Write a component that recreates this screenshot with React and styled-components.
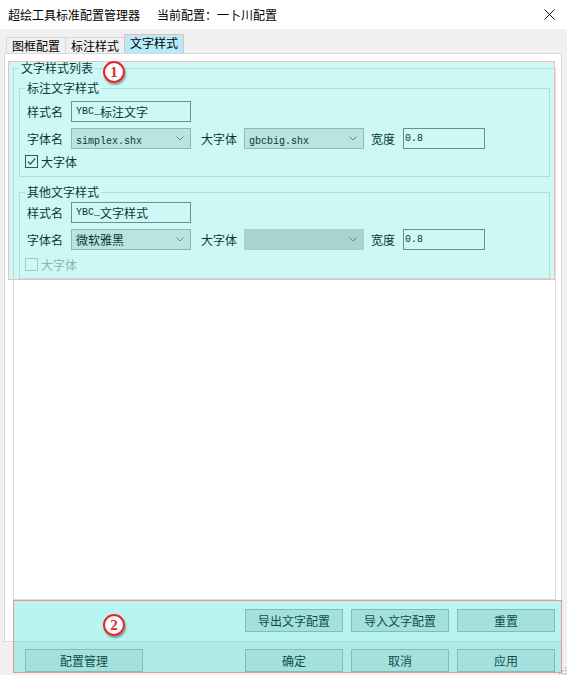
import styled, { createGlobalStyle } from 'styled-components';

const GlobalStyle = createGlobalStyle`
  html, body {
    margin: 0;
    padding: 0;
    background: #f0f0f0;
  }
  body {
    font-family: "Noto Sans CJK SC", "Microsoft YaHei", sans-serif;
    font-size: 12px;
    color: #000;
  }
`;

const Window = styled.div`
  position: relative;
  width: 567px;
  height: 675px;
  background: #f0f0f0;
  display: flex;
  flex-direction: column;
  overflow: hidden;
`;

const TitleBar = styled.div`
  height: 29px;
  flex-shrink: 0;
  background: #fff;
  display: flex;
  align-items: center;
  padding: 0 12px 0 8px;
  line-height: 14px;
`;

const Title = styled.span`
  & + & {
    margin-left: 17px;
  }
`;

const CloseButton = styled.button`
  margin-left: auto;
  border: 0;
  background: none;
  padding: 0;
  display: flex;
`;

const TabStrip = styled.div`
  height: 24px;
  flex-shrink: 0;
  display: flex;
  align-items: flex-end;
  padding-left: 6px;
`;

const Tab = styled.div`
  height: ${(p) => (p.$active ? 19 : 16)}px;
  box-sizing: border-box;
  padding: 0 5px;
  line-height: 16px;
  border: 1px solid ${(p) => (p.$active ? '#f3b6b6' : '#d9d9d9')};
  border-bottom: none;
  background: ${(p) => (p.$active ? '#b5ecf8' : '#f0f0f0')};
  position: relative;
  z-index: ${(p) => (p.$active ? 1 : 0)};

  & + & {
    margin-left: -1px;
  }
`;

const Panel = styled.div`
  margin: 0 5px 0 4px;
  height: 589px;
  box-sizing: border-box;
  background: #fff;
  border: 1px solid #d9d9d9;
  display: flex;
  flex-direction: column;
  padding: 7px 5px 0 8px;
`;

const GroupBox = styled.fieldset`
  margin: 0;
  min-width: 0;
  border: 1px solid #dcdcdc;
  padding: ${(p) => p.$pad};
  display: flex;
  flex-direction: column;
  flex: ${(p) => (p.$grow ? 1 : 'none')};

  & + & {
    margin-top: 8px;
  }
`;

const Legend = styled.legend`
  padding: 0 2px;
  line-height: 14px;
  height: 14px;
`;

const Row = styled.div`
  display: flex;
  align-items: center;
  height: 21px;
  margin-top: ${(p) => p.$gap || 0}px;
`;

const Label = styled.span`
  width: ${(p) => p.$w}px;
  margin-left: ${(p) => p.$ml || 0}px;
  padding-left: ${(p) => p.$pl || 0}px;
  box-sizing: border-box;
  flex-shrink: 0;
  white-space: nowrap;
`;

const TextBox = styled.div`
  width: ${(p) => p.$w}px;
  height: 21px;
  box-sizing: border-box;
  border: 1px solid #7a7a7a;
  background: #fff;
  padding-left: ${(p) => p.$pl}px;
  display: flex;
  align-items: center;
  white-space: nowrap;
`;

const Latin = styled.span`
  font-family: "Liberation Mono", monospace;
  font-size: 10px;
`;

const Combo = styled.div`
  width: 120px;
  height: 21px;
  box-sizing: border-box;
  border: 1px solid ${(p) => (p.$disabled ? '#cbcbcb' : '#acacac')};
  background: ${(p) => (p.$disabled ? '#cfcfcf' : '#e5e5e5')};
  padding: 0 6px 0 4px;
  display: flex;
  align-items: center;
  justify-content: space-between;
`;

const CheckRow = styled.label`
  display: flex;
  align-items: center;
  height: 13px;
  margin-top: ${(p) => p.$gap}px;
  color: ${(p) => (p.$disabled ? '#a8a8a8' : '#000')};
`;

const Box = styled.span`
  width: 13px;
  height: 13px;
  box-sizing: border-box;
  border: 1px solid ${(p) => (p.$disabled ? '#c5c5c5' : '#333')};
  background: #fff;
  display: flex;
  margin-right: 3px;
`;

const ButtonRow = styled.div`
  display: flex;
  justify-content: flex-end;
  gap: 8px;
  margin: 9px 1px 9px 0;
`;

const FooterRow = styled.div`
  display: flex;
  justify-content: space-between;
  margin: 7px 12px 0 25px;
`;

const ButtonGroup = styled.div`
  display: flex;
  gap: 8px;
`;

const Button = styled.button`
  width: ${(p) => p.$w || 98}px;
  height: 23px;
  padding: 0;
  background: #e1e1e1;
  border: 1px solid #adadad;
  font: 12px "Noto Sans CJK SC", sans-serif;
  color: #000;
`;

const Highlight = styled.div`
  position: absolute;
  left: ${(p) => p.$x}px;
  top: ${(p) => p.$y}px;
  width: ${(p) => p.$w}px;
  height: ${(p) => p.$h}px;
  box-sizing: border-box;
  border: 1px solid ${(p) => p.$border};
  background: rgba(40, 225, 210, ${(p) => p.$alpha});
  pointer-events: none;
`;

const Marker = styled.div`
  position: absolute;
  left: ${(p) => p.$x}px;
  top: ${(p) => p.$y}px;
  width: 22px;
  height: 22px;
  box-sizing: border-box;
  border-radius: 50%;
  border: 2px solid #e3262b;
  background: radial-gradient(circle at 40% 35%, #fff 55%, #f3f3f3 100%);
  box-shadow: 1px 2px 2px rgba(0, 0, 0, 0.35);
  color: #e3262b;
  font: bold 15px "Liberation Serif", serif;
  line-height: 18px;
  text-align: center;
`;

const Grip = styled.svg`
  position: absolute;
  right: 0;
  bottom: 0;
`;

function Chevron() {
  return (
    <svg width='8' height='5' viewBox='0 0 8 5'>
      <path d='M0.5 0.5 L4 4 L7.5 0.5' fill='none' stroke='#707070' strokeWidth='1' />
    </svg>
  );
}

function Check() {
  return (
    <svg width='11' height='11' viewBox='0 0 11 11'>
      <path d='M1.8 5.6 L4.3 8.1 L9.3 2.4' fill='none' stroke='#222' strokeWidth='1.3' />
    </svg>
  );
}

function StyleGroup({ title, name, font, bigFont, top, checkGap, bottom, checked }) {
  return (
    <GroupBox $pad={`${top}px 7px ${bottom}px 5px`}>
      <Legend>{title}</Legend>
      <Row>
        <Label $w={46} $pl={2}>样式名</Label>
        <TextBox $w={120} $pl={4}>
          <Latin>YBC_</Latin>
          {name}
        </TextBox>
      </Row>
      <Row $gap={6}>
        <Label $w={46} $pl={2}>字体名</Label>
        <Combo>
          <span>{font}</span>
          <Chevron />
        </Combo>
        <Label $w={43} $ml={10}>大字体</Label>
        <Combo $disabled={!bigFont}>
          <span>{bigFont}</span>
          <Chevron />
        </Combo>
        <Label $w={32} $ml={7}>宽度</Label>
        <TextBox $w={82} $pl={1}>
          <Latin>0.8</Latin>
        </TextBox>
      </Row>
      <CheckRow $gap={checkGap} $disabled={!checked}>
        <Box $disabled={!checked}>{checked && <Check />}</Box>
        大字体
      </CheckRow>
    </GroupBox>
  );
}

export default function App() {
  return (
    <>
      <GlobalStyle />
      <Window>
        <TitleBar>
          <Title>超绘工具标准配置管理器</Title>
          <Title>当前配置：一卜川配置</Title>
          <CloseButton>
            <svg width='11' height='11' viewBox='0 0 11 11'>
              <path d='M0.5 0.5 L10.5 10.5 M10.5 0.5 L0.5 10.5' stroke='#111' strokeWidth='1' />
            </svg>
          </CloseButton>
        </TitleBar>

        <TabStrip>
          <Tab>图框配置</Tab>
          <Tab>标注样式</Tab>
          <Tab $active>文字样式</Tab>
        </TabStrip>

        <Panel>
          <GroupBox $grow $pad='6px 5px 0 5px'>
            <Legend>文字样式列表</Legend>
            <StyleGroup
              title='标注文字样式'
              name='标注文字'
              font={<Latin>simplex.shx</Latin>}
              bigFont={<Latin>gbcbig.shx</Latin>}
              top={6}
              checkGap={6}
              bottom={8}
              checked
            />
            <StyleGroup
              title='其他文字样式'
              name='文字样式'
              font='微软雅黑'
              bigFont={null}
              top={3}
              checkGap={8}
              bottom={7}
            />
          </GroupBox>
          <ButtonRow>
            <Button>导出文字配置</Button>
            <Button>导入文字配置</Button>
            <Button>重置</Button>
          </ButtonRow>
        </Panel>

        <FooterRow>
          <Button $w={118}>配置管理</Button>
          <ButtonGroup>
            <Button>确定</Button>
            <Button>取消</Button>
            <Button>应用</Button>
          </ButtonGroup>
        </FooterRow>

        <Highlight $x={8} $y={61} $w={547} $h={219} $border='#f5bcbc' $alpha={0.23} />
        <Highlight $x={13} $y={600} $w={549} $h={73} $border='#f09292' $alpha={0.33} />
        <Marker $x={103} $y={61}>1</Marker>
        <Marker $x={103} $y={614}>2</Marker>

        <Grip width='8' height='10' viewBox='0 0 8 10'>
          <g fill='#b8b8b8'>
            <rect x='6' y='2' width='1.5' height='1.5' />
            <rect x='6' y='5' width='1.5' height='1.5' />
            <rect x='3' y='5' width='1.5' height='1.5' />
            <rect x='6' y='8' width='1.5' height='1.5' />
            <rect x='3' y='8' width='1.5' height='1.5' />
            <rect x='0' y='8' width='1.5' height='1.5' />
          </g>
        </Grip>
      </Window>
    </>
  );
}
